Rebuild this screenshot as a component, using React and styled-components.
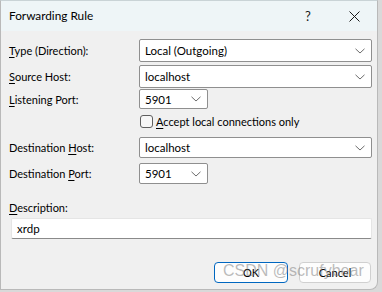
import React from "react";
import styled, { createGlobalStyle } from "styled-components";

const Global = createGlobalStyle`
  html, body { margin: 0; padding: 0; }
  body {
    width: 382px; height: 292px; overflow: hidden;
    background: #d9d9d9;
    font-family: Lato, "Noto Sans", sans-serif;
  }
`;

const Window = styled.div`
  position: relative;
  width: 378px;
  height: 290px;
  box-sizing: border-box;
  border: 1px solid #b9b9b9;
  border-top-color: #c9d3d6;
  border-radius: 0 0 8px 0;
  background: #f0f0f0;
  overflow: hidden;
  display: flex;
  flex-direction: column;
  font-size: 11px;
  color: #000;
`;

const TitleBar = styled.div`
  height: 30px;
  flex: none;
  background: #eef5f7;
  display: flex;
  align-items: center;
  padding-left: 8px;
`;

const Title = styled.div`
  flex: 1;
  font-size: 11.8px;
  margin-top: -1px;
`;

const TitleBtn = styled.div`
  width: 46px;
  height: 30px;
  display: flex;
  align-items: center;
  justify-content: center;
  font-size: 13px;
  color: #1a1a1a;
`;

const Body = styled.div`
  display: flex;
  flex-direction: column;
  padding: 0 5px 0 8px;
`;

const Row = styled.div`
  display: flex;
  align-items: center;
  margin-top: ${(p) => p.$mt}px;
  height: ${(p) => p.$h}px;
`;

const Label = styled.div`
  width: 130px;
  flex: none;
  white-space: nowrap;
`;

const Key = styled.span`
  text-decoration: underline;
  text-underline-offset: 2px;
  text-decoration-thickness: 1px;
`;

const Combo = styled.div`
  box-sizing: border-box;
  width: ${(p) => (p.$narrow ? "69px" : "234px")};
  height: 100%;
  background: #fff;
  border: 1px solid #8f8f8f;
  border-radius: 2px;
  display: flex;
  align-items: center;
  padding-left: 5px;
  padding-right: 6px;
  font-size: 11.5px;
`;

const ComboText = styled.div`
  flex: 1;
  white-space: nowrap;
`;

const Chevron = () => (
  <svg width="10" height="6" viewBox="0 0 10 6">
    <path d="M0.5 0.8 L5 5 L9.5 0.8" fill="none" stroke="#5c5c5c" strokeWidth="0.9" />
  </svg>
);

const Checkbox = styled.div`
  box-sizing: border-box;
  width: 13px;
  height: 13px;
  border: 1px solid #5f5f5f;
  border-radius: 3px;
  background: #f7f7f7;
  margin-left: 1px;
  margin-right: 3px;
`;

const Spacer = styled.div`
  width: 130px;
  flex: none;
`;

const TextBox = styled.div`
  box-sizing: border-box;
  margin-left: 2px;
  width: 363px;
  height: 100%;
  background: #fff;
  border: 1px solid #e5e5e5;
  border-bottom: 1px solid #8a8a8a;
  border-radius: 2px;
  display: flex;
  align-items: center;
  padding-left: 5px;
  font-size: 11.5px;
`;

const ButtonRow = styled.div`
  display: flex;
  justify-content: flex-end;
  gap: 11px;
  margin-top: ${(p) => p.$mt}px;
  padding-right: 1px;
`;

const Button = styled.div`
  box-sizing: border-box;
  width: ${(p) => p.$w}px;
  height: 21px;
  border-radius: 4px;
  background: #fdfdfd;
  border: 1px solid ${(p) => (p.$primary ? "#0067c0" : "#d0d0d0")};
  display: flex;
  align-items: center;
  justify-content: center;
  font-size: 11px;
`;

const Watermark = styled.div`
  position: absolute;
  left: 222px;
  top: 261px;
  font-family: "Liberation Sans", Arial, sans-serif;
  font-size: 16px;
  color: rgba(120, 120, 120, 0.5);
  white-space: nowrap;
  pointer-events: none;
`;

export default function App() {
  return (
    <>
      <Global />
      <Window>
        <TitleBar>
          <Title>Forwarding Rule</Title>
          <TitleBtn>?</TitleBtn>
          <TitleBtn>
            <svg width="11" height="11" viewBox="0 0 11 11">
              <path d="M0.5 0.5 L10.5 10.5 M10.5 0.5 L0.5 10.5" stroke="#1a1a1a" strokeWidth="1" />
            </svg>
          </TitleBtn>
        </TitleBar>
        <Body>
          <Row $mt={8} $h={23}>
            <Label><Key>T</Key>ype (Direction):</Label>
            <Combo><ComboText>Local (Outgoing)</ComboText><Chevron /></Combo>
          </Row>
          <Row $mt={3} $h={23}>
            <Label><Key>S</Key>ource Host:</Label>
            <Combo><ComboText>localhost</ComboText><Chevron /></Combo>
          </Row>
          <Row $mt={1} $h={20}>
            <Label><Key>L</Key>istening Port:</Label>
            <Combo $narrow><ComboText>5901</ComboText><Chevron /></Combo>
          </Row>
          <Row $mt={6} $h={13}>
            <Spacer />
            <Checkbox />
            <span><Key>A</Key>ccept local connections only</span>
          </Row>
          <Row $mt={9} $h={21}>
            <Label>Destination <Key>H</Key>ost:</Label>
            <Combo><ComboText>localhost</ComboText><Chevron /></Combo>
          </Row>
          <Row $mt={5} $h={21}>
            <Label>Destination <Key>P</Key>ort:</Label>
            <Combo $narrow><ComboText>5901</ComboText><Chevron /></Combo>
          </Row>
          <Row $mt={15} $h={16}>
            <Label><Key>D</Key>escription:</Label>
          </Row>
          <Row $mt={3} $h={21}>
            <TextBox>xrdp</TextBox>
          </Row>
          <ButtonRow $mt={23}>
            <Button $w={74} $primary>OK</Button>
            <Button $w={72}>Cancel</Button>
          </ButtonRow>
        </Body>
        <Watermark>CSDN @scrufybear</Watermark>
      </Window>
    </>
  );
}
